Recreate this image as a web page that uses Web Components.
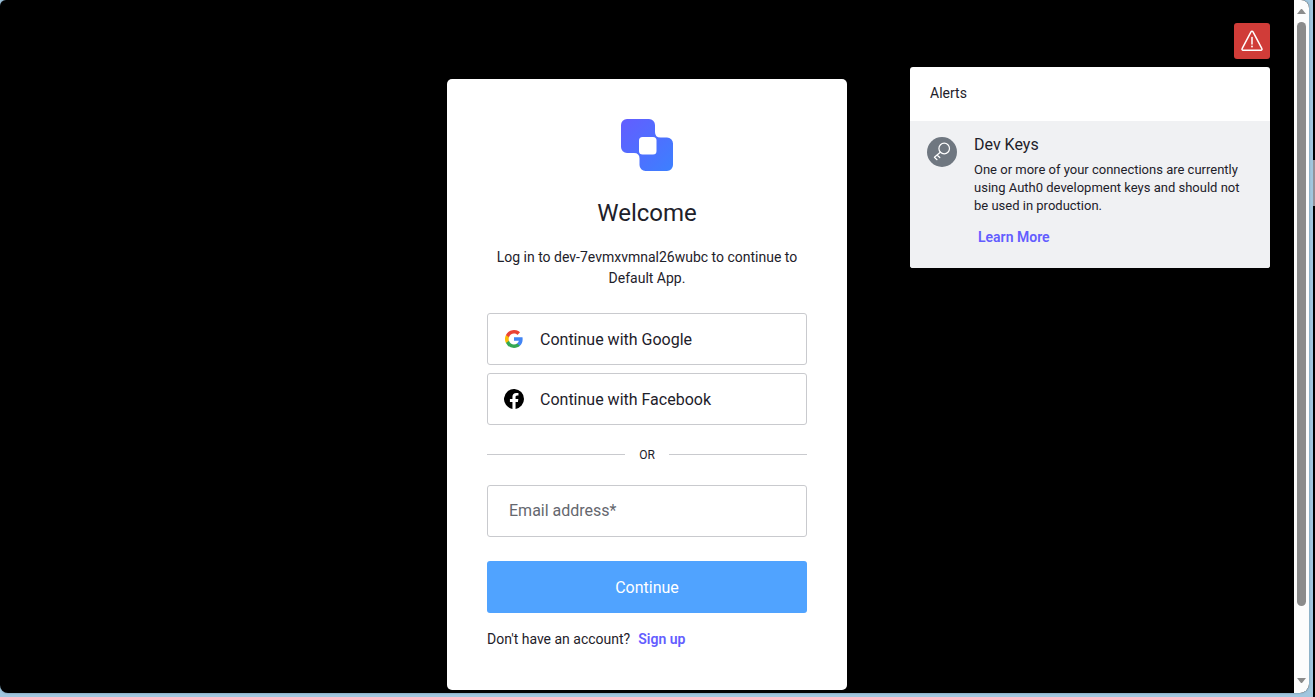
<!DOCTYPE html>
<html lang="en">
<head>
<meta charset="utf-8">
<title>Log in | Default App</title>
<style>
  html, body { margin: 0; }
  body { font-family: Roboto, "Liberation Sans", sans-serif; color: #1e212a; font-size: 14px; line-height: 21px; }
</style>
</head>
<body>
<app-window>
  <login-card slot="main">
    <brand-logo slot="logo"></brand-logo>
    <span slot="title">Welcome</span>
    <span slot="description">Log in to dev-7evmxvmnal26wubc to continue to Default App.</span>
    <social-button slot="social">
      <svg slot="icon" width="20" height="20" viewBox="-1 -1 20 20" aria-hidden="true">
        <path fill="#4285f4" d="M17.64 9.2c0-.64-.06-1.25-.16-1.84H9v3.48h4.84a4.14 4.14 0 0 1-1.8 2.72v2.26h2.92c1.7-1.57 2.68-3.88 2.68-6.62z"/>
        <path fill="#34a853" d="M9 18c2.43 0 4.47-.8 5.96-2.18l-2.92-2.26c-.8.54-1.84.86-3.04.86-2.34 0-4.32-1.58-5.03-3.7H.96v2.33A9 9 0 0 0 9 18z"/>
        <path fill="#fbbc05" d="M3.97 10.71A5.4 5.4 0 0 1 3.68 9c0-.6.1-1.17.28-1.71V4.96H.96a9 9 0 0 0 0 8.08z"/>
        <path fill="#ea4335" d="M9 3.58c1.32 0 2.5.45 3.44 1.35l2.58-2.59A9 9 0 0 0 .96 4.96l3 2.33C4.68 5.16 6.66 3.58 9 3.58z"/>
      </svg>
      Continue with Google
    </social-button>
    <social-button slot="social">
      <svg slot="icon" width="20" height="20" viewBox="0 0 20 20" aria-hidden="true">
        <path fill="#000" d="M20 10A10 10 0 1 0 8.44 19.88v-6.99H5.9V10h2.54V7.8c0-2.51 1.49-3.89 3.77-3.89 1.1 0 2.24.2 2.24.2v2.45h-1.26c-1.24 0-1.63.77-1.63 1.57V10h2.78l-.45 2.89h-2.33v6.99A10 10 0 0 0 20 10z"/>
      </svg>
      Continue with Facebook
    </social-button>
  </login-card>
  <alert-center slot="aside">
    <span slot="heading">Alerts</span>
    <alert-item>
      <span slot="title">Dev Keys</span>
      One or more of your connections are currently using Auth0 development keys and should not be used in production.
      <span slot="action">Learn More</span>
    </alert-item>
  </alert-center>
</app-window>

<template id="t-app-window">
  <style>
    :host { display: grid; grid-template-columns: minmax(0, 1fr) 2px; min-height: 100vh; background: #a1c6de; }
    .window { display: flex; margin: 0 4px 4px 0; border-radius: 6px 8px 9px 8px; overflow: hidden; background: #000; box-shadow: 0 0 2px #5f7f92; }
    main { flex: 1; display: grid; grid-template-columns: minmax(0, 1fr) 400px minmax(0, 1fr); align-items: start; }
    .main { grid-column: 2; padding: 79px 0 3px; }
    .aside { grid-column: 3; display: flex; justify-content: flex-end; padding: 23px 24px 0 0; }
    .edge { background: linear-gradient(#000 160px, #93929a 160px, #93929a 206px, #000 206px); }
  </style>
  <div class="window">
    <main>
      <div class="main"><slot name="main"></slot></div>
      <div class="aside"><slot name="aside"></slot></div>
    </main>
    <scroll-rail></scroll-rail>
  </div>
  <div class="edge"></div>
</template>

<template id="t-scroll-rail">
  <style>
    :host { display: flex; flex-direction: column; width: 15px; background: #fcfcfc; }
    .arrow { box-sizing: border-box; height: 22px; display: flex; align-items: center; justify-content: center; }
    .down { padding-bottom: 4px; }
    .track { flex: 1; display: flex; justify-content: center; }
    .thumb { width: 9px; height: 90%; border-radius: 5px; background: #8b8b8b; }
  </style>
  <div class="arrow"><svg width="9" height="5" viewBox="0 0 9 5"><path fill="#8b8b8b" d="M0 5 4 0h1l4 5z"/></svg></div>
  <div class="track"><div class="thumb"></div></div>
  <div class="arrow down"><svg width="9" height="5" viewBox="0 0 9 5"><path fill="#8b8b8b" d="M0 0 4 5h1l4-5z"/></svg></div>
</template>

<template id="t-brand-logo">
  <style>:host { display: block; height: 52px; } svg { display: block; }</style>
  <svg width="52" height="52" viewBox="0 0 52 52" role="img" aria-label="Logo">
    <defs><linearGradient id="g" x1="0" y1="0" x2="1" y2="1"><stop offset="0" stop-color="#635dff"/><stop offset="1" stop-color="#3c80ff"/></linearGradient></defs>
    <path fill="url(#g)" d="M6 0h22a6 6 0 0 1 6 6v7q0 5.500 5.500 5.500H46a6 6 0 0 1 6 6V46a6 6 0 0 1-6 6H24.500a6 6 0 0 1-6-6v-6.500q0-5.500-5.500-5.500H6a6 6 0 0 1-6-6V6a6 6 0 0 1 6-6z"/>
    <rect x="18" y="18" width="17.500" height="17.500" rx="3.500" fill="#fff"/>
  </svg>
</template>

<template id="t-login-card">
  <style>
    :host { display: block; box-sizing: border-box; padding: 40px; border-radius: 5px; background: #fff; }
    .logo { display: flex; justify-content: center; }
    h1 { margin: 24px 0 16px; font-size: 24px; line-height: 36px; font-weight: 400; text-align: center; }
    p { margin: 0; }
    .description { text-align: center; }
    .social { display: grid; gap: 8px; margin: 24px 0; }
    .divider { display: flex; align-items: center; gap: 14px; font-size: 12px; line-height: 12px; }
    .divider::before, .divider::after { content: ""; flex: 1; height: 1px; margin-bottom: 1px; background: #c9cace; }
    form { display: grid; gap: 24px; margin: 24px 0 16px; }
    input { box-sizing: border-box; width: 100%; height: 52px; margin: 0; padding: 0 21px 2px; border: 1px solid #c9cace; border-radius: 3px; background: #fff; font: 16px/20px Roboto, sans-serif; color: #1e212a; }
    input::placeholder { color: #65676e; opacity: 1; }
    button { height: 52px; padding: 2px 0 0; border: 0; border-radius: 3px; background: #50a3ff; color: #fff; font: 16px/20px Roboto, sans-serif; }
    .signup { display: flex; gap: 8px; }
    a { color: #635dff; font-weight: 600; text-decoration: none; }
  </style>
  <div class="logo"><slot name="logo"></slot></div>
  <h1><slot name="title"></slot></h1>
  <p class="description"><slot name="description"></slot></p>
  <div class="social"><slot name="social"></slot></div>
  <div class="divider">OR</div>
  <form>
    <input type="email" name="email" placeholder="Email address*" aria-label="Email address" required>
    <button type="submit">Continue</button>
  </form>
  <p class="signup">Don't have an account? <a href="#signup">Sign up</a></p>
</template>

<template id="t-social-button">
  <style>
    :host { display: block; }
    button { box-sizing: border-box; width: 100%; height: 52px; display: flex; align-items: center; gap: 16px; margin: 0; padding: 0 16px; border: 1px solid #c9cace; border-radius: 3px; background: #fff; color: #1e212a; font: 16px/20px Roboto, sans-serif; }
    span { padding-top: 2px; }
  </style>
  <button type="button"><slot name="icon"></slot><span><slot></slot></span></button>
</template>

<template id="t-alert-center">
  <style>
    :host { display: flex; flex-direction: column; align-items: flex-end; gap: 8px; }
    button { width: 36px; height: 36px; display: grid; place-items: center; padding: 0; border: 0; border-radius: 3px; background: #d03c38; }
    section { width: 360px; border-radius: 3px; overflow: hidden; background: #fff; }
    h2 { margin: 0; padding: 16px 20px 18px; font-size: 14px; line-height: 20px; font-weight: 400; }
  </style>
  <button type="button" aria-label="Show alerts">
    <svg width="24" height="24" viewBox="0 0 24 24" fill="none" stroke="#fff" stroke-width="1.500" stroke-linejoin="round" stroke-linecap="round">
      <path d="M11.100 2.700a1 1 0 0 1 1.800 0l9 17a1 1 0 0 1-.9 1.500H3a1 1 0 0 1-.9-1.500z"/>
      <path d="M12 8.500v6.500"/><path stroke-width="1.800" d="M12 17.500v.1"/>
    </svg>
  </button>
  <section><h2><slot name="heading"></slot></h2><slot></slot></section>
</template>

<template id="t-alert-item">
  <style>
    :host { display: flex; gap: 17px; padding: 12px 24px 21px 17px; background: #f0f1f3; }
    .icon { flex: none; width: 30px; height: 30px; margin-top: 4px; border-radius: 50%; background: #6f7780; }
    svg { display: block; }
    h3 { margin: 0 0 4px; font-size: 16px; line-height: 24px; font-weight: 400; }
    p { margin: 0 0 12px; font-size: 13px; line-height: 18px; }
    a { display: block; padding-left: 4px; line-height: 20px; color: #635dff; font-weight: 600; text-decoration: none; }
  </style>
  <div class="icon">
    <svg width="30" height="30" viewBox="0 0 30 30" fill="none" stroke="#fff" stroke-width="1.200" stroke-linecap="round" stroke-linejoin="round">
      <circle cx="17.200" cy="11.500" r="5.300"/>
      <path d="M13.300 15.200 7.400 20.200M10 18l2.800 2.500M7.400 20.200l2.600 2.500"/>
    </svg>
  </div>
  <div>
    <h3><slot name="title"></slot></h3>
    <p><slot></slot></p>
    <a href="#learn-more"><slot name="action"></slot></a>
  </div>
</template>

<script>
  class TemplateElement extends HTMLElement {
    constructor() {
      super();
      const template = document.getElementById("t-" + this.localName);
      this.attachShadow({ mode: "open" }).append(template.content.cloneNode(true));
    }
  }
  for (const name of ["app-window", "scroll-rail", "brand-logo", "login-card", "social-button", "alert-center", "alert-item"]) {
    customElements.define(name, class extends TemplateElement {});
  }
</script>
</body>
</html>
